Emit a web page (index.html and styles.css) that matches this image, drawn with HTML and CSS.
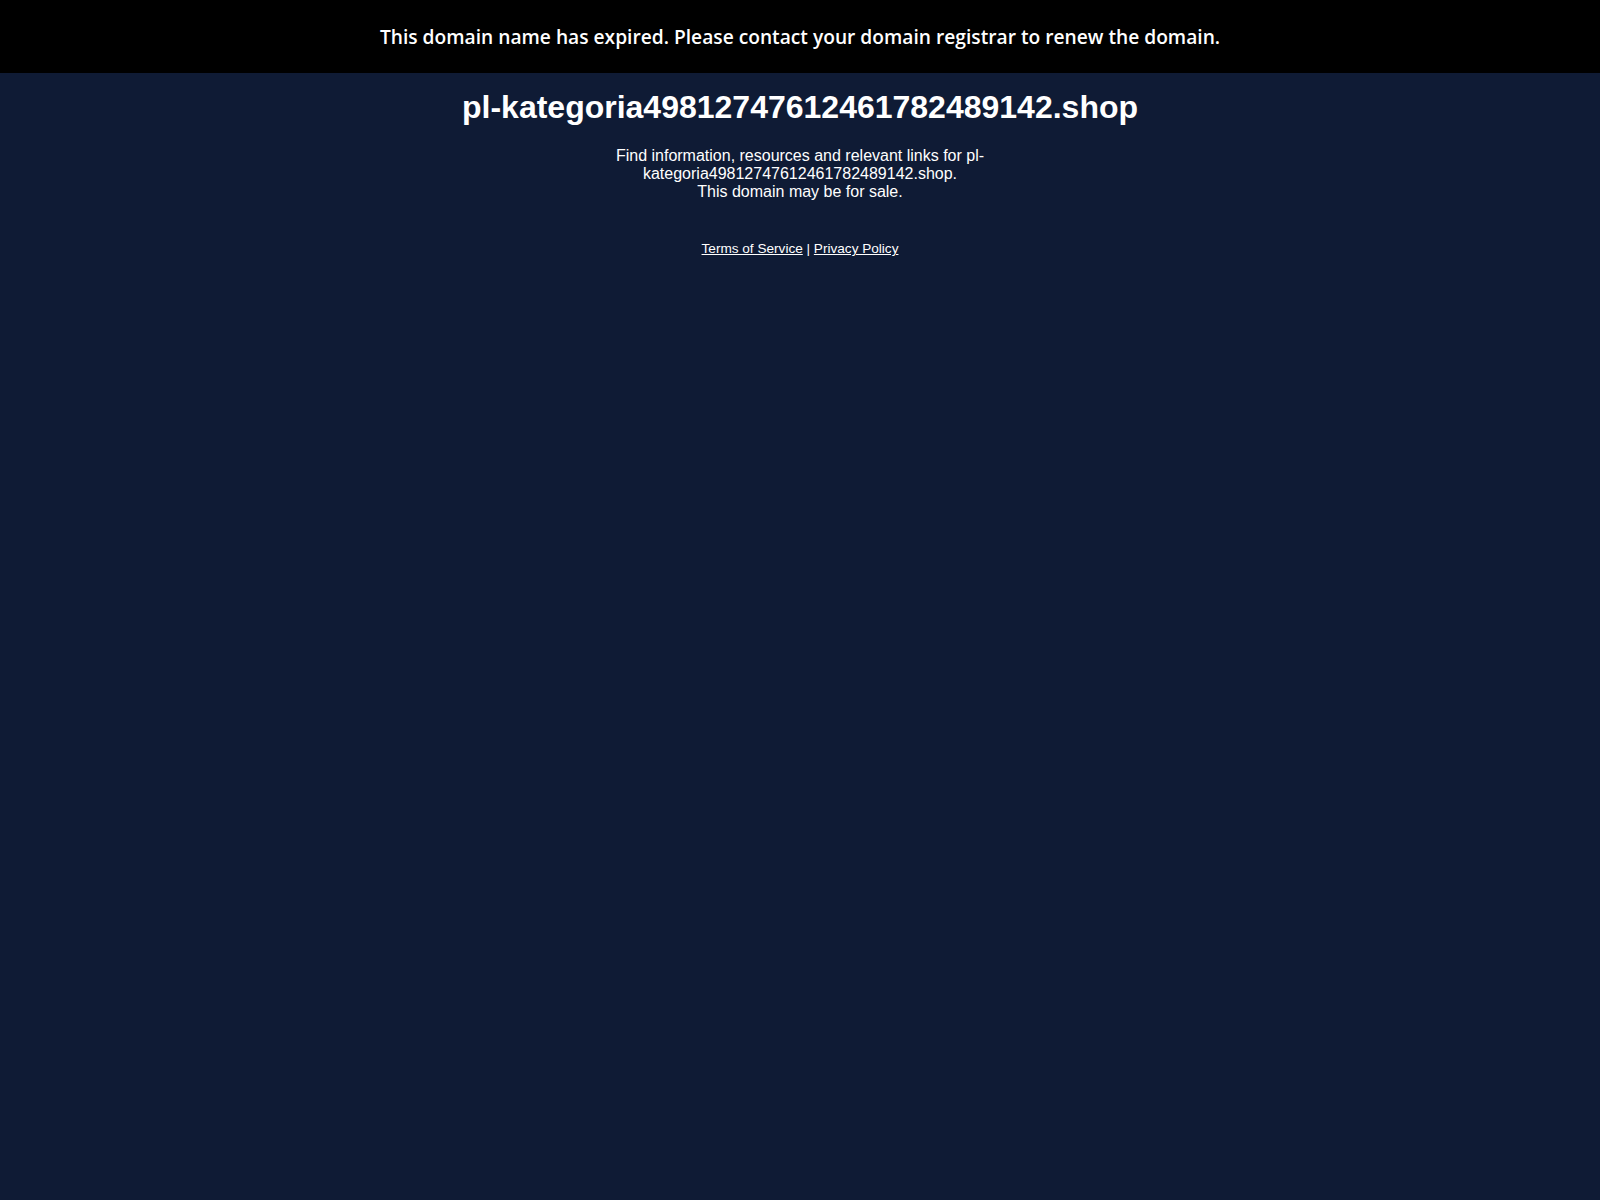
FILE: index.html
```html
<!DOCTYPE html>
<html lang="en">
<head>
<meta charset="utf-8">
<title>pl-kategoria49812747612461782489142.shop</title>
<link rel="stylesheet" href="styles.css">
</head>
<body>
<div class="banner">This domain name has expired. Please contact your domain registrar to renew the domain.</div>
<main class="content">
  <h1 class="title">pl-kategoria49812747612461782489142.shop</h1>
  <p class="desc">Find information, resources and relevant links for pl-kategoria49812747612461782489142.shop.<br>This domain may be for sale.</p>
  <p class="links"><a href="#">Terms of Service</a> | <a href="#">Privacy Policy</a></p>
</main>
</body>
</html>
```
FILE: styles.css
```css
html, body {
  margin: 0;
  padding: 0;
  background: #0f1b35;
  color: #ffffff;
  font-family: "Liberation Sans", Arial, sans-serif;
  min-height: 100%;
}
.banner {
  background: #000000;
  height: 73px;
  display: flex;
  align-items: center;
  justify-content: center;
  font-family: "Open Sans", "Noto Sans", sans-serif;
  font-weight: 600;
  font-size: 19.2px;
  color: #ffffff;
}
.content {
  display: flex;
  flex-direction: column;
  align-items: center;
  text-align: center;
}
.title {
  margin: 15px 0 0;
  font-size: 32px;
  font-weight: bold;
  line-height: 38px;
}
.desc {
  margin: 21px 0 0;
  max-width: 400px;
  font-size: 16px;
  line-height: 18px;
}
.links {
  margin: 40px 0 0;
  font-size: 13.6px;
  line-height: 16px;
}
.links a {
  color: #ffffff;
  text-decoration: underline;
}
```
